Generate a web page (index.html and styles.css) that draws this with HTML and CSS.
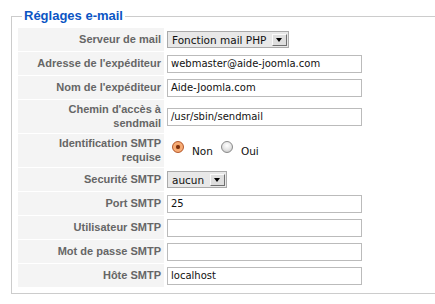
FILE: index.html
```html
<!DOCTYPE html>
<html lang="fr">
<head>
<meta charset="utf-8">
<title>Réglages e-mail</title>
<link rel="stylesheet" href="styles.css">
</head>
<body>
<fieldset class="settings">
  <legend class="settings-title">Réglages e-mail</legend>
  <table class="admintable">
    <tr>
      <td class="key">Serveur de mail</td>
      <td class="val"><span class="select">Fonction mail PHP<span class="arrow"></span></span></td>
    </tr>
    <tr>
      <td class="key">Adresse de l'expéditeur</td>
      <td class="val"><span class="input">webmaster@aide-joomla.com</span></td>
    </tr>
    <tr>
      <td class="key">Nom de l'expéditeur</td>
      <td class="val"><span class="input">Aide-Joomla.com</span></td>
    </tr>
    <tr>
      <td class="key two">Chemin d'accès à sendmail</td>
      <td class="val"><span class="input">/usr/sbin/sendmail</span></td>
    </tr>
    <tr>
      <td class="key two">Identification SMTP requise</td>
      <td class="val">
        <span class="radios">
          <span class="radio checked"></span><span class="radio-label">Non</span>
          <span class="radio"></span><span class="radio-label">Oui</span>
        </span>
      </td>
    </tr>
    <tr>
      <td class="key">Securité SMTP</td>
      <td class="val"><span class="select">aucun<span class="arrow"></span></span></td>
    </tr>
    <tr>
      <td class="key">Port SMTP</td>
      <td class="val"><span class="input">25</span></td>
    </tr>
    <tr>
      <td class="key">Utilisateur SMTP</td>
      <td class="val"><span class="input"></span></td>
    </tr>
    <tr>
      <td class="key">Mot de passe SMTP</td>
      <td class="val"><span class="input"></span></td>
    </tr>
    <tr>
      <td class="key">Hôte SMTP</td>
      <td class="val"><span class="input">localhost</span></td>
    </tr>
  </table>
</fieldset>
</body>
</html>
```
FILE: styles.css
```css
html, body {
  margin: 0;
  padding: 0;
  background: #fff;
  overflow: hidden;
}
body {
  font-family: "Liberation Sans", Arial, sans-serif;
  font-size: 11px;
  width: 435px;
  height: 304px;
}
.settings {
  margin: 9px 0 0 11px;
  padding: 0 0 5px 5px;
  border: 1px solid #ccc;
  border-right: none;
  width: 440px;
  box-sizing: border-box;
}
.settings-title {
  color: #0b55c4;
  font-weight: bold;
  font-size: 13px;
  padding: 0 2px;
  margin-left: 5px;
  line-height: 14px;
}
.admintable {
  border-collapse: separate;
  border-spacing: 1px;
  margin-top: 4px;
}
.admintable td {
  padding: 0 3px;
}
.admintable td.key {
  width: 146px;
  height: 23px;
  background: #f4f4f4;
  color: #666;
  font-weight: bold;
  font-size: 11px;
  text-align: right;
  vertical-align: middle;
  box-sizing: border-box;
  line-height: 14px;
  padding-bottom: 2px;
}
.admintable td.key.two {
  height: 33px;
  padding-bottom: 1px;
}
.admintable td.val {
  vertical-align: middle;
  padding-left: 2px;
}
.input {
  display: block;
  width: 195px;
  height: 18px;
  box-sizing: border-box;
  border: 1px solid #bbb;
  background: #fff;
  font-family: "DejaVu Sans", Verdana, sans-serif;
  font-size: 10px;
  line-height: 16px;
  padding: 0 3px;
  color: #111;
  white-space: nowrap;
}
.select {
  display: inline-flex;
  align-items: center;
  height: 17px;
  box-sizing: border-box;
  border: 1px solid #aaa;
  background: #e8e8e8;
  font-family: "DejaVu Sans", Verdana, sans-serif;
  font-size: 10.5px;
  color: #111;
  padding: 0 1px 0 4px;
  gap: 6px;
}
.arrow {
  width: 15px;
  height: 12px;
  box-sizing: border-box;
  border: 1px solid;
  border-color: #fafafa #6f6f6f #6f6f6f #fafafa;
  background: #dedede;
  position: relative;
}
.arrow::after {
  content: "";
  position: absolute;
  left: 3px;
  top: 3px;
  border-left: 3.5px solid transparent;
  border-right: 3.5px solid transparent;
  border-top: 4px solid #000;
}
.radios {
  display: flex;
  align-items: center;
  font-family: "DejaVu Sans", Verdana, sans-serif;
  font-size: 10.5px;
  color: #111;
  padding-left: 5px;
}
.radio {
  width: 12px;
  height: 12px;
  margin-bottom: 8px;
  border-radius: 50%;
  box-sizing: border-box;
  border: 1px solid #8a8a8a;
  background: radial-gradient(circle at 50% 35%, #fff 0, #e6e6e6 50%, #bdbdbd 100%);
}
.radio.checked {
  border-color: #b5582a;
  background: radial-gradient(circle, #6b2a0c 0, #8a3a14 25%, #f6a56a 35%, #f7b07c 60%, #e07b3c 100%);
}
.radio-label {
  margin: 0 8px 0 8px;
}
```
